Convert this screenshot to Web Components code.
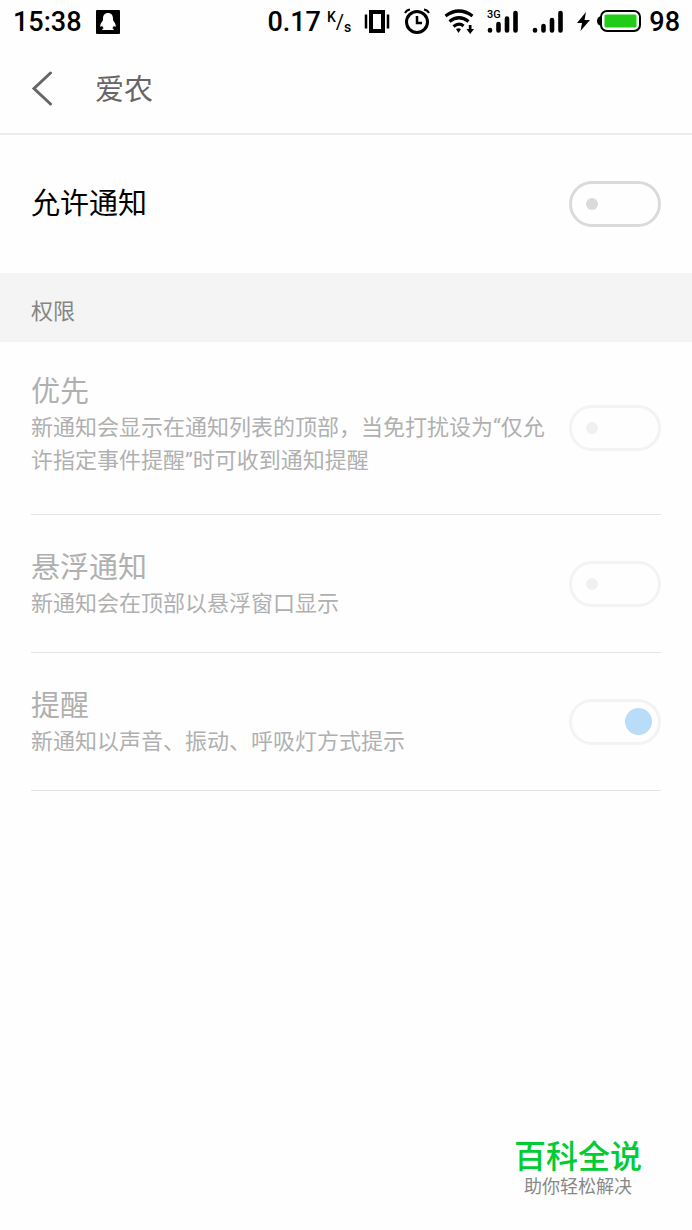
<!DOCTYPE html>
<html lang="zh-CN">
<head>
<meta charset="utf-8">
<meta name="viewport" content="width=device-width, initial-scale=1">
<title>爱农</title>
<style>
body { margin: 0; background: #fefefe; color: #000; font-family: Roboto, "Noto Sans CJK SC", sans-serif; }
</style>
</head>
<body>
<settings-page>
  <status-bar slot="top" time="15:38" speed="0.17" battery="98"></status-bar>
  <nav-header slot="top">爱农</nav-header>
  <setting-row label="允许通知" primary></setting-row>
  <section-title>权限</section-title>
  <setting-row label="优先" multiline disabled>新通知会显示在通知列表的顶部，当免打扰设为“仅允许指定事件提醒”时可收到通知提醒</setting-row>
  <setting-row label="悬浮通知" disabled>新通知会在顶部以悬浮窗口显示</setting-row>
  <setting-row label="提醒" disabled checked>新通知以声音、振动、呼吸灯方式提示</setting-row>
  <site-mark slot="bottom"><span slot="name">百科全说</span>助你轻松解决</site-mark>
</settings-page>
<script>
class Base extends HTMLElement {
  constructor() {
    super();
    this.attachShadow({ mode: "open" });
  }
  connectedCallback() {
    this.shadowRoot.innerHTML = this.render();
  }
}

customElements.define("settings-page", class extends Base {
  render() {
    return `<style>
      :host { display: flex; flex-direction: column; min-height: 100vh; }
      footer { margin-top: auto; display: flex; justify-content: flex-end; padding: 32px 50px 31px 30px; }
    </style>
    <slot name="top"></slot>
    <main><slot></slot></main>
    <footer><slot name="bottom"></slot></footer>`;
  }
});

customElements.define("status-bar", class extends Base {
  render() {
    const a = n => this.getAttribute(n);
    return `<style>
      :host { display: flex; align-items: center; justify-content: space-between; height: 44px; padding: 0 12px 0 13px; font-size: 27px; font-weight: 500; line-height: 32px; }
      div { display: flex; align-items: center; }
      svg { display: block; flex: none; }
      .left { gap: 14px; }
      .right { gap: 13px; }
      .net { gap: 6px; }
      .power { gap: 8px; }
      .unit { font-size: 14px; line-height: 14px; height: 24px; align-items: stretch; }
      .unit .slash { font-size: 20px; line-height: 24px; font-weight: 400; }
      .unit .s { align-self: flex-end; }
      .bolt { margin-right: -1px; }
      text { font: 500 11px Roboto, sans-serif; }
    </style>
    <div class="left"><span>${a("time")}</span>
      <svg width="24" height="24" viewBox="0 0 24 24"><rect width="24" height="24" rx="1"/><path fill="#fff" d="M12 3C8.800 3 7 5.200 7 8.300V10.200C5.500 12 4 14.300 4.300 16.400C4.700 17 5.600 16.300 6.200 15.700C6.500 16.900 7.200 17.700 7.800 18.200C6.600 18.600 6 19.200 6.300 20H17.700C18 19.200 17.400 18.600 16.200 18.200C16.800 17.700 17.500 16.900 17.800 15.700C18.400 16.300 19.300 17 19.700 16.400C20 14.300 18.500 12 17 10.200V8.300C17 5.200 15.200 3 12 3Z"/></svg>
    </div>
    <div class="right">
      <div class="net"><span>${a("speed")}</span><div class="unit"><span>K</span><span class="slash">/</span><span class="s">s</span></div></div>
      <svg width="26" height="26" viewBox="0 0 26 26" fill="none" stroke="#000"><path stroke-width="4" d="M7 3H19V22H7Z"/><path stroke-width="2.500" d="M2 5.500V19.500M24 5.500V19.500"/></svg>
      <svg width="28" height="28" viewBox="0 0 28 28" fill="none" stroke="#000"><circle cx="14" cy="14" r="10.500" stroke-width="3"/><path stroke-width="2.500" d="M14 8V15H19"/><path stroke-width="2" d="M2 5Q3.500 2 7 1.500M26 5Q24.500 2 21 1.500"/></svg>
      <svg width="30" height="26" viewBox="0 0 30 26" fill="none" stroke="#000" stroke-width="3.200"><path d="M1.500 7Q15 -3 28.500 7M5.500 12.500Q15 5 24.500 12.500M9.500 17.500Q15 13 19.500 17"/><path fill="#000" stroke="none" d="M12 20Q14.500 18.500 17 20L14.500 24ZM24.800 16h2.700v4H30L26.200 25L22.500 20h2.300Z"/></svg>
      <svg width="32" height="26" viewBox="0 0 32 26"><text x="0" y="9">3G</text><path stroke="#000" stroke-width="4.600" stroke-linecap="round" d="M3 21.500V21M11.500 21.500V15M20 21.500V9.500M28.500 21.500V4"/></svg>
      <svg width="32" height="26" viewBox="0 0 32 26"><path stroke="#000" stroke-width="4.600" stroke-linecap="round" d="M3 21.500V21M11.500 21.500V17M20 21.500V11M28.500 21.500V4"/></svg>
      <div class="power">
        <svg class="bolt" width="13" height="22" viewBox="0 0 13 22"><path d="M9 1L0 12H5L3.500 20L13 9H7.500Z"/></svg>
        <svg width="44" height="24" viewBox="0 0 44 24"><path d="M4 6Q0 7 0 11T4 16Z"/><rect x="4" y="1" width="39" height="20" rx="6" fill="#fff" stroke="#000" stroke-width="2"/><rect x="7.500" y="4.500" width="32" height="13" rx="1.500" fill="#20cc18"/></svg>
        <span>${a("battery")}</span>
      </div>
    </div>`;
  }
});

customElements.define("nav-header", class extends Base {
  render() {
    return `<style>
      :host { display: flex; align-items: center; height: 89px; border-bottom: 2px solid #ebebeb; padding: 0 30px; gap: 41px; color: #666; }
      button { border: 0; background: none; padding: 0; color: inherit; display: block; }
      svg { display: block; }
      h1 { margin: 0; padding-top: 2px; font-size: 29px; line-height: 38px; font-weight: 400; }
    </style>
    <button type="button" aria-label="返回"><svg width="24" height="36" viewBox="0 0 24 36" fill="none" stroke="currentColor" stroke-width="3" stroke-linecap="round"><path d="M20.500 2L4 17.500L20.500 33"/></svg></button>
    <h1><slot></slot></h1>`;
  }
});

customElements.define("section-title", class extends Base {
  render() {
    return `<style>
      :host { display: block; background: #f4f4f4; padding: 22px 31px 14px; color: #858585; }
      h2 { margin: 0; font-size: 22px; line-height: 33px; font-weight: 400; }
    </style><h2><slot></slot></h2>`;
  }
});

customElements.define("toggle-switch", class extends Base {
  render() {
    const on = this.hasAttribute("checked") ? "checked" : "";
    const off = this.hasAttribute("disabled") ? "disabled" : "";
    return `<style>
      :host { display: block; flex: none; }
      input { appearance: none; display: flex; align-items: center; box-sizing: border-box; width: 92px; height: 46px; margin: 0; border: 3px solid #dadada; border-radius: 23px; padding: 0 14px; }
      input::before { content: ""; width: 12px; height: 12px; border-radius: 50%; background: #dadada; }
      input:checked { justify-content: flex-end; padding: 0 6px; }
      input:checked::before { width: 27px; height: 27px; background: #2196f3; }
      input:disabled { border-color: #f3f3f3; }
      input:disabled::before { background: #f0f0f0; }
      input:checked:disabled::before { background: #b9dcf9; }
    </style><input type="checkbox" role="switch" aria-label="${this.getAttribute("label")}" ${on} ${off}>`;
  }
});

customElements.define("setting-row", class extends Base {
  render() {
    const label = this.getAttribute("label");
    const flags = ["checked", "disabled"].filter(n => this.hasAttribute(n)).join(" ");
    const desc = this.hasAttribute("primary") ? "" : "<p><slot></slot></p>";
    return `<style>
      :host { display: flex; align-items: center; justify-content: space-between; gap: 24px; margin: 0 31px; border-bottom: 1px solid #e4e4e4; color: #b0b0b0; }
      :host([primary]) { border: 0; color: #000; }
      .text { padding: 34px 0 32px; }
      :host([multiline]) .text { padding: 31px 0 37px; }
      :host([primary]) .text { padding: 50px 0; }
      h3 { margin: 0; font-size: 29px; line-height: 38px; font-weight: 400; }
      p { margin: 0; font-size: 22px; line-height: 33px; }
    </style>
    <div class="text"><h3>${label}</h3>${desc}</div>
    <toggle-switch label="${label}" ${flags}></toggle-switch>`;
  }
});

customElements.define("site-mark", class extends Base {
  render() {
    return `<style>
      :host { display: block; text-align: center; color: #888; font-size: 18px; line-height: 24px; }
      strong { display: block; color: #0c3; font-size: 32px; line-height: 36px; font-weight: 500; }
    </style><strong><slot name="name"></slot></strong><slot></slot>`;
  }
});
</script>
</body>
</html>
